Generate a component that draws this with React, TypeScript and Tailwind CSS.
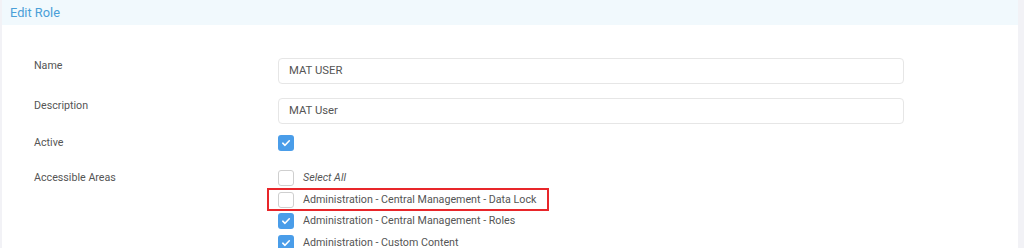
import React from "react";

type Area = {
  label: string;
  checked: boolean;
  italic?: boolean;
  marked?: boolean;
};

const areas: Area[] = [
  { label: "Select All", checked: false, italic: true },
  { label: "Administration - Central Management - Data Lock", checked: false, marked: true },
  { label: "Administration - Central Management - Roles", checked: true },
  { label: "Administration - Custom Content", checked: true },
];

const Box = ({ checked }: { checked: boolean }) =>
  checked ? (
    <span className="flex h-4 w-4 shrink-0 items-center justify-center rounded-[3px] bg-[#4a9de9]">
      <svg width="10" height="10" viewBox="0 0 10 10" fill="none">
        <path d="M1.8 5.2 4 7.3 8.3 2.8" stroke="#fff" strokeWidth="1.6" strokeLinecap="round" strokeLinejoin="round" />
      </svg>
    </span>
  ) : (
    <span className="h-4 w-4 shrink-0 rounded-[3px] border border-[#cfcfcf] bg-white" />
  );

const Label = ({ children, className }: { children: React.ReactNode; className?: string }) => (
  <div className={"w-[244px] shrink-0 text-[10.7px] leading-4 text-[#555] " + (className ?? "")}>{children}</div>
);

const TextInput = ({ value }: { value: string }) => (
  <div className="flex h-[26px] w-[626px] items-center rounded-[4px] border border-[#e6e6e6] px-[10px] text-[11.3px] text-[#555]">
    {value}
  </div>
);

export default function App() {
  return (
    <div className="h-[248px] overflow-hidden bg-[#f2f2f6] pl-[2px] pr-[6px] font-['Roboto',sans-serif]">
      <div className="h-full bg-white">
        <div className="flex h-[25px] items-center bg-[#f1f9fd] pl-[8px] text-[12.8px] text-[#4a9fd8]">
          Edit Role
        </div>

        <div className="pl-[32px] pt-[33px]">
          <div className="flex items-start">
            <Label>Name</Label>
            <TextInput value="MAT USER" />
          </div>

          <div className="mt-[14px] flex items-start">
            <Label>Description</Label>
            <TextInput value="MAT User" />
          </div>

          <div className="mt-[11px] flex items-center">
            <Label>Active</Label>
            <Box checked />
          </div>

          <div className="mt-[19px] flex items-start">
            <Label>Accessible Areas</Label>
            <div className="flex flex-col">
              {areas.map((a) => (
                <div key={a.label} className="relative flex h-[21.67px] items-start gap-[9px]">
                  <Box checked={a.checked} />
                  <span className={"text-[10.7px] leading-4 text-[#555] " + (a.italic ? "italic" : "")}>
                    {a.label}
                  </span>
                  {a.marked && (
                    <span className="pointer-events-none absolute left-[-11px] top-[-4px] h-[23px] w-[282px] border-2 border-[#e8262a]" />
                  )}
                </div>
              ))}
            </div>
          </div>
        </div>
      </div>
    </div>
  );
}
